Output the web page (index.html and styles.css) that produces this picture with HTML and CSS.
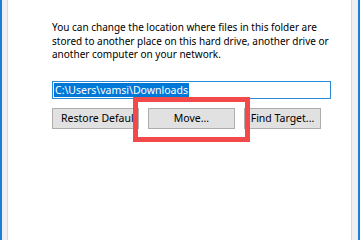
FILE: index.html
```html
<!DOCTYPE html>
<html lang="en">
<head>
    <meta charset="UTF-8">
    <meta name="viewport" content="width=device-width, initial-scale=1.0">
    <title>Downloads Properties</title>
    <link rel="stylesheet" href="styles.css">
</head>
<body>
<div class="window">
    <div class="panel">
        <p class="info">You can change the location where files in this folder are<br>
            stored to another place on this hard drive, another drive or<br>
            another computer on your network.</p>

        <div class="path-box">
            <span class="selected">C:\Users\vamsi\Downloads</span>
        </div>

        <div class="buttons">
            <button class="btn btn-restore">Restore Default</button>
            <button class="btn btn-move">Move...</button>
            <button class="btn btn-find">Find Target...</button>
        </div>

        <!-- highlight around the Move button -->
        <div class="callout"></div>
    </div>
</div>
</body>
</html>
```

FILE: styles.css
```css
html, body {
    margin: 0;
    height: 100%;
}
body {
    font-family: "Noto Sans", "Open Sans", sans-serif;
    font-size: 10.5px;
    color: #000;
    background: #fff;
}
.window {
    height: 100%;
    box-sizing: border-box;
    border-left: 2px solid #1a7fd9;
    border-right: 2px solid #1a7fd9;
    background: #f0f0f0;
    padding: 0 6px 0 5px;
}
.panel {
    position: relative;
    height: 100%;
    box-sizing: border-box;
    background: #fff;
    border-left: 1px solid #d9d9d9;
    border-right: 1px solid #d9d9d9;
    padding: 21px 20px 0 44px;
}
.info {
    margin: 0 0 19px 0;
    font-size: 10px;
    line-height: 13.5px;
    white-space: nowrap;
}
.path-box {
    height: 18px;
    box-sizing: border-box;
    border: 1px solid #2b8ad8;
    padding: 1px;
    margin-bottom: 9px;
}
.selected {
    display: inline-block;
    height: 14px;
    line-height: 14px;
    background: #0078d7;
    color: #fff;
    padding: 0 1px;
}
.buttons {
    display: flex;
    gap: 9px;
}
.btn {
    height: 21px;
    font-family: inherit;
    font-size: 10.5px;
    padding: 0;
    background: #e1e1e1;
    border: 1px solid #adadad;
    border-radius: 0;
    color: #000;
    white-space: nowrap;
    overflow: hidden;
}
.btn-restore {
    width: 87px;
    text-align: left;
    padding-left: 8px;
}
.btn-move {
    width: 87px;
}
.btn-find {
    width: 77px;
}
.callout {
    position: absolute;
    left: 125px;
    top: 97px;
    width: 107px;
    height: 35px;
    border: 5px solid #f24a4a;
}
```
